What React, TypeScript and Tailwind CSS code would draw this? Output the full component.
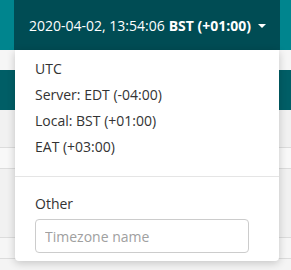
import React from "react";

const zones = [
  "UTC",
  "Server: EDT (-04:00)",
  "Local: BST (+01:00)",
  "EAT (+03:00)",
];

export default function App() {
  return (
    <div
      className="relative w-[291px] h-[270px] overflow-hidden bg-[#f4f4f4]"
      style={{ fontFamily: '"Open Sans", sans-serif' }}
    >
      {/* page behind */}
      <div className="h-[50px] bg-[#00858e]" />
      <div className="h-[20px] bg-[#f6f6f6]" />
      <div className="h-[40px] bg-[#005e66]" />
      <div className="h-[38px] bg-[#f1f1f1] border-b border-[#dcdcdc]" />
      <div className="h-[21px] bg-[#f8f8f8] border-b border-[#dcdcdc]" />
      <div className="h-[69px] bg-[#f1f1f1] border-b border-[#dcdcdc]" />
      <div className="h-[21px] bg-[#f6f6f6] border-b border-[#dcdcdc]" />

      {/* header button + dropdown */}
      <div className="absolute left-[14px] top-0 w-[266px]">
        <button className="flex h-[50px] w-full items-center pl-[15px] text-[14px] text-white bg-[#004c54]">
          <span>2020-04-02, 13:54:06</span>
          <span className="ml-[4px] font-bold">BST (+01:00)</span>
          <svg width="8" height="4" viewBox="0 0 8 4" className="ml-[7px] mt-[1px]">
            <path d="M0 0h8L4 4z" fill="#fff" />
          </svg>
        </button>
        <div className="mx-[1px] bg-white rounded-b-[4px] shadow-[0_2px_8px_rgba(0,0,0,0.2)] text-[14px] text-[#333]">
          <ul className="pt-[6px] pb-[16px]">
            {zones.map((z) => (
              <li key={z} className="h-[26px] leading-[26px] pl-[20px]">
                {z}
              </li>
            ))}
          </ul>
          <div className="border-t border-[#e5e5e5] px-[20px] pt-[17px] pb-[8px]">
            <div className="leading-[20px]">Other</div>
            <input
              placeholder="Timezone name"
              className="mt-[5px] w-[214px] h-[34px] px-[9px] border border-[#ccc] rounded-[4px] text-[14px] placeholder:text-[#a0a0a0] outline-none"
            />
          </div>
        </div>
      </div>
    </div>
  );
}
